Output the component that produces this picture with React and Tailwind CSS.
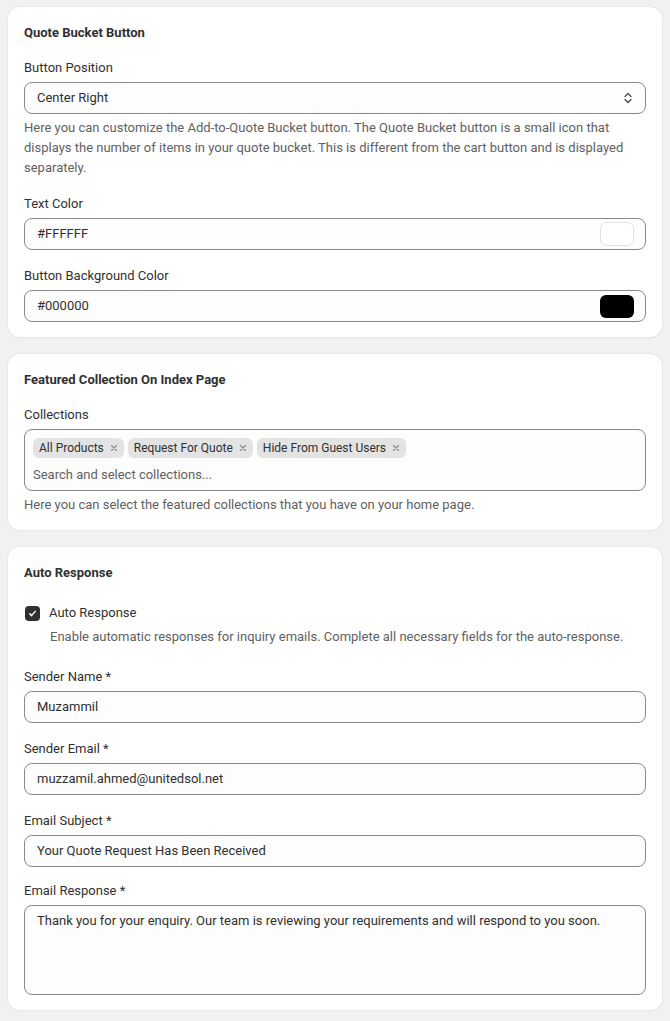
import React from "react";

const font = { fontFamily: "Roboto, 'Liberation Sans', sans-serif" };

function Card({ title, children }) {
  return (
    <section className="bg-white rounded-xl shadow-[0_0_0_1px_#e8e8e8,0_1px_1px_rgba(0,0,0,0.1)] px-4 pt-4 pb-[15px]">
      <h2 className="text-[13px] leading-5 font-bold text-[#303030]">{title}</h2>
      <div className="mt-[15px] flex flex-col gap-4">{children}</div>
    </section>
  );
}

function Field({ label, children, help }) {
  return (
    <div className="flex flex-col">
      <label className="text-[13px] leading-5 text-[#303030]">{label}</label>
      <div className="mt-1">{children}</div>
      {help && <p className="mt-1 text-[13px] leading-5 text-[#616161]">{help}</p>}
    </div>
  );
}

function TextBox({ value, swatch }) {
  return (
    <div className="h-8 flex items-center justify-between rounded-lg border border-[#8a8a8a] bg-[#fdfdfd] pl-3 pr-[11px]">
      <span className="text-[13px] text-[#303030]">{value}</span>
      {swatch && (
        <span
          className={
            swatch === "white"
              ? "w-[34px] h-6 rounded-md bg-white border border-[#e3e3e3]"
              : "w-[34px] h-[23px] rounded-md bg-black"
          }
        />
      )}
    </div>
  );
}

function SelectIcon() {
  return (
    <svg width="20" height="20" viewBox="0 0 20 20" fill="none" stroke="#4a4a4a" strokeWidth="1.3" strokeLinecap="round" strokeLinejoin="round">
      <path d="M7 8.5l3-3 3 3" />
      <path d="M7 11.5l3 3 3-3" />
    </svg>
  );
}

function Chip({ label }) {
  return (
    <span className="h-5 flex items-center gap-[5px] rounded-md bg-[#e3e3e3] pl-[6px] pr-[5px] text-[12px] text-[#303030]">
      {label}
      <svg width="10" height="10" viewBox="0 0 10 10" stroke="#8a8a8a" strokeWidth="1.1" strokeLinecap="round">
        <path d="M2.5 2.5l5 5M7.5 2.5l-5 5" />
      </svg>
    </span>
  );
}

export default function App() {
  return (
    <div style={font} className="min-h-screen bg-[#f1f1f1] px-2 pt-[7px] pb-4 flex flex-col gap-[17px]">
      <Card title="Quote Bucket Button">
        <Field
          label="Button Position"
          help="Here you can customize the Add-to-Quote Bucket button. The Quote Bucket button is a small icon that displays the number of items in your quote bucket. This is different from the cart button and is displayed separately."
        >
          <div className="h-8 flex items-center justify-between rounded-lg border border-[#8a8a8a] bg-[#fdfdfd] pl-3 pr-[7px]">
            <span className="text-[13px] text-[#303030]">Center Right</span>
            <SelectIcon />
          </div>
        </Field>
        <Field label="Text Color">
          <TextBox value="#FFFFFF" swatch="white" />
        </Field>
        <Field label="Button Background Color">
          <TextBox value="#000000" swatch="black" />
        </Field>
      </Card>

      <Card title="Featured Collection On Index Page">
        <Field
          label="Collections"
          help="Here you can select the featured collections that you have on your home page."
        >
          <div className="rounded-lg border border-[#8a8a8a] bg-[#fdfdfd] pl-2 pr-3 pt-2 pb-[5px]">
            <div className="flex flex-wrap gap-1">
              <Chip label="All Products" />
              <Chip label="Request For Quote" />
              <Chip label="Hide From Guest Users" />
            </div>
            <div className="mt-[7px] text-[13px] leading-5 text-[#616161]">Search and select collections...</div>
          </div>
        </Field>
      </Card>

      <Card title="Auto Response">
        <div className="pt-[5px] flex flex-col">
          <div className="flex items-center gap-[9px] pl-px">
            <span className="w-[15px] h-[15px] rounded-[4px] bg-[#303030] flex items-center justify-center">
              <svg width="11" height="11" viewBox="0 0 12 12" fill="none" stroke="white" strokeWidth="1.6" strokeLinecap="round" strokeLinejoin="round">
                <path d="M3 6.3l2 2 4-4.6" />
              </svg>
            </span>
            <span className="text-[13px] leading-5 text-[#303030]">Auto Response</span>
          </div>
          <p className="mt-1 pl-[26px] text-[13px] leading-5 text-[#616161]">
            Enable automatic responses for inquiry emails. Complete all necessary fields for the auto-response.
          </p>
        </div>
        <div className="pt-1">
          <Field label="Sender Name *">
            <TextBox value="Muzammil" />
          </Field>
        </div>
        <Field label="Sender Email *">
          <TextBox value="muzzamil.ahmed@unitedsol.net" />
        </Field>
        <Field label="Email Subject *">
          <TextBox value="Your Quote Request Has Been Received" />
        </Field>
        <div className="-mt-[2px]">
          <Field label="Email Response *">
            <div className="h-[90px] rounded-lg border border-[#8a8a8a] bg-[#fdfdfd] px-3 pt-[5px] text-[13px] leading-5 text-[#303030]">
              Thank you for your enquiry. Our team is reviewing your requirements and will respond to you soon.
            </div>
          </Field>
        </div>
      </Card>
    </div>
  );
}
